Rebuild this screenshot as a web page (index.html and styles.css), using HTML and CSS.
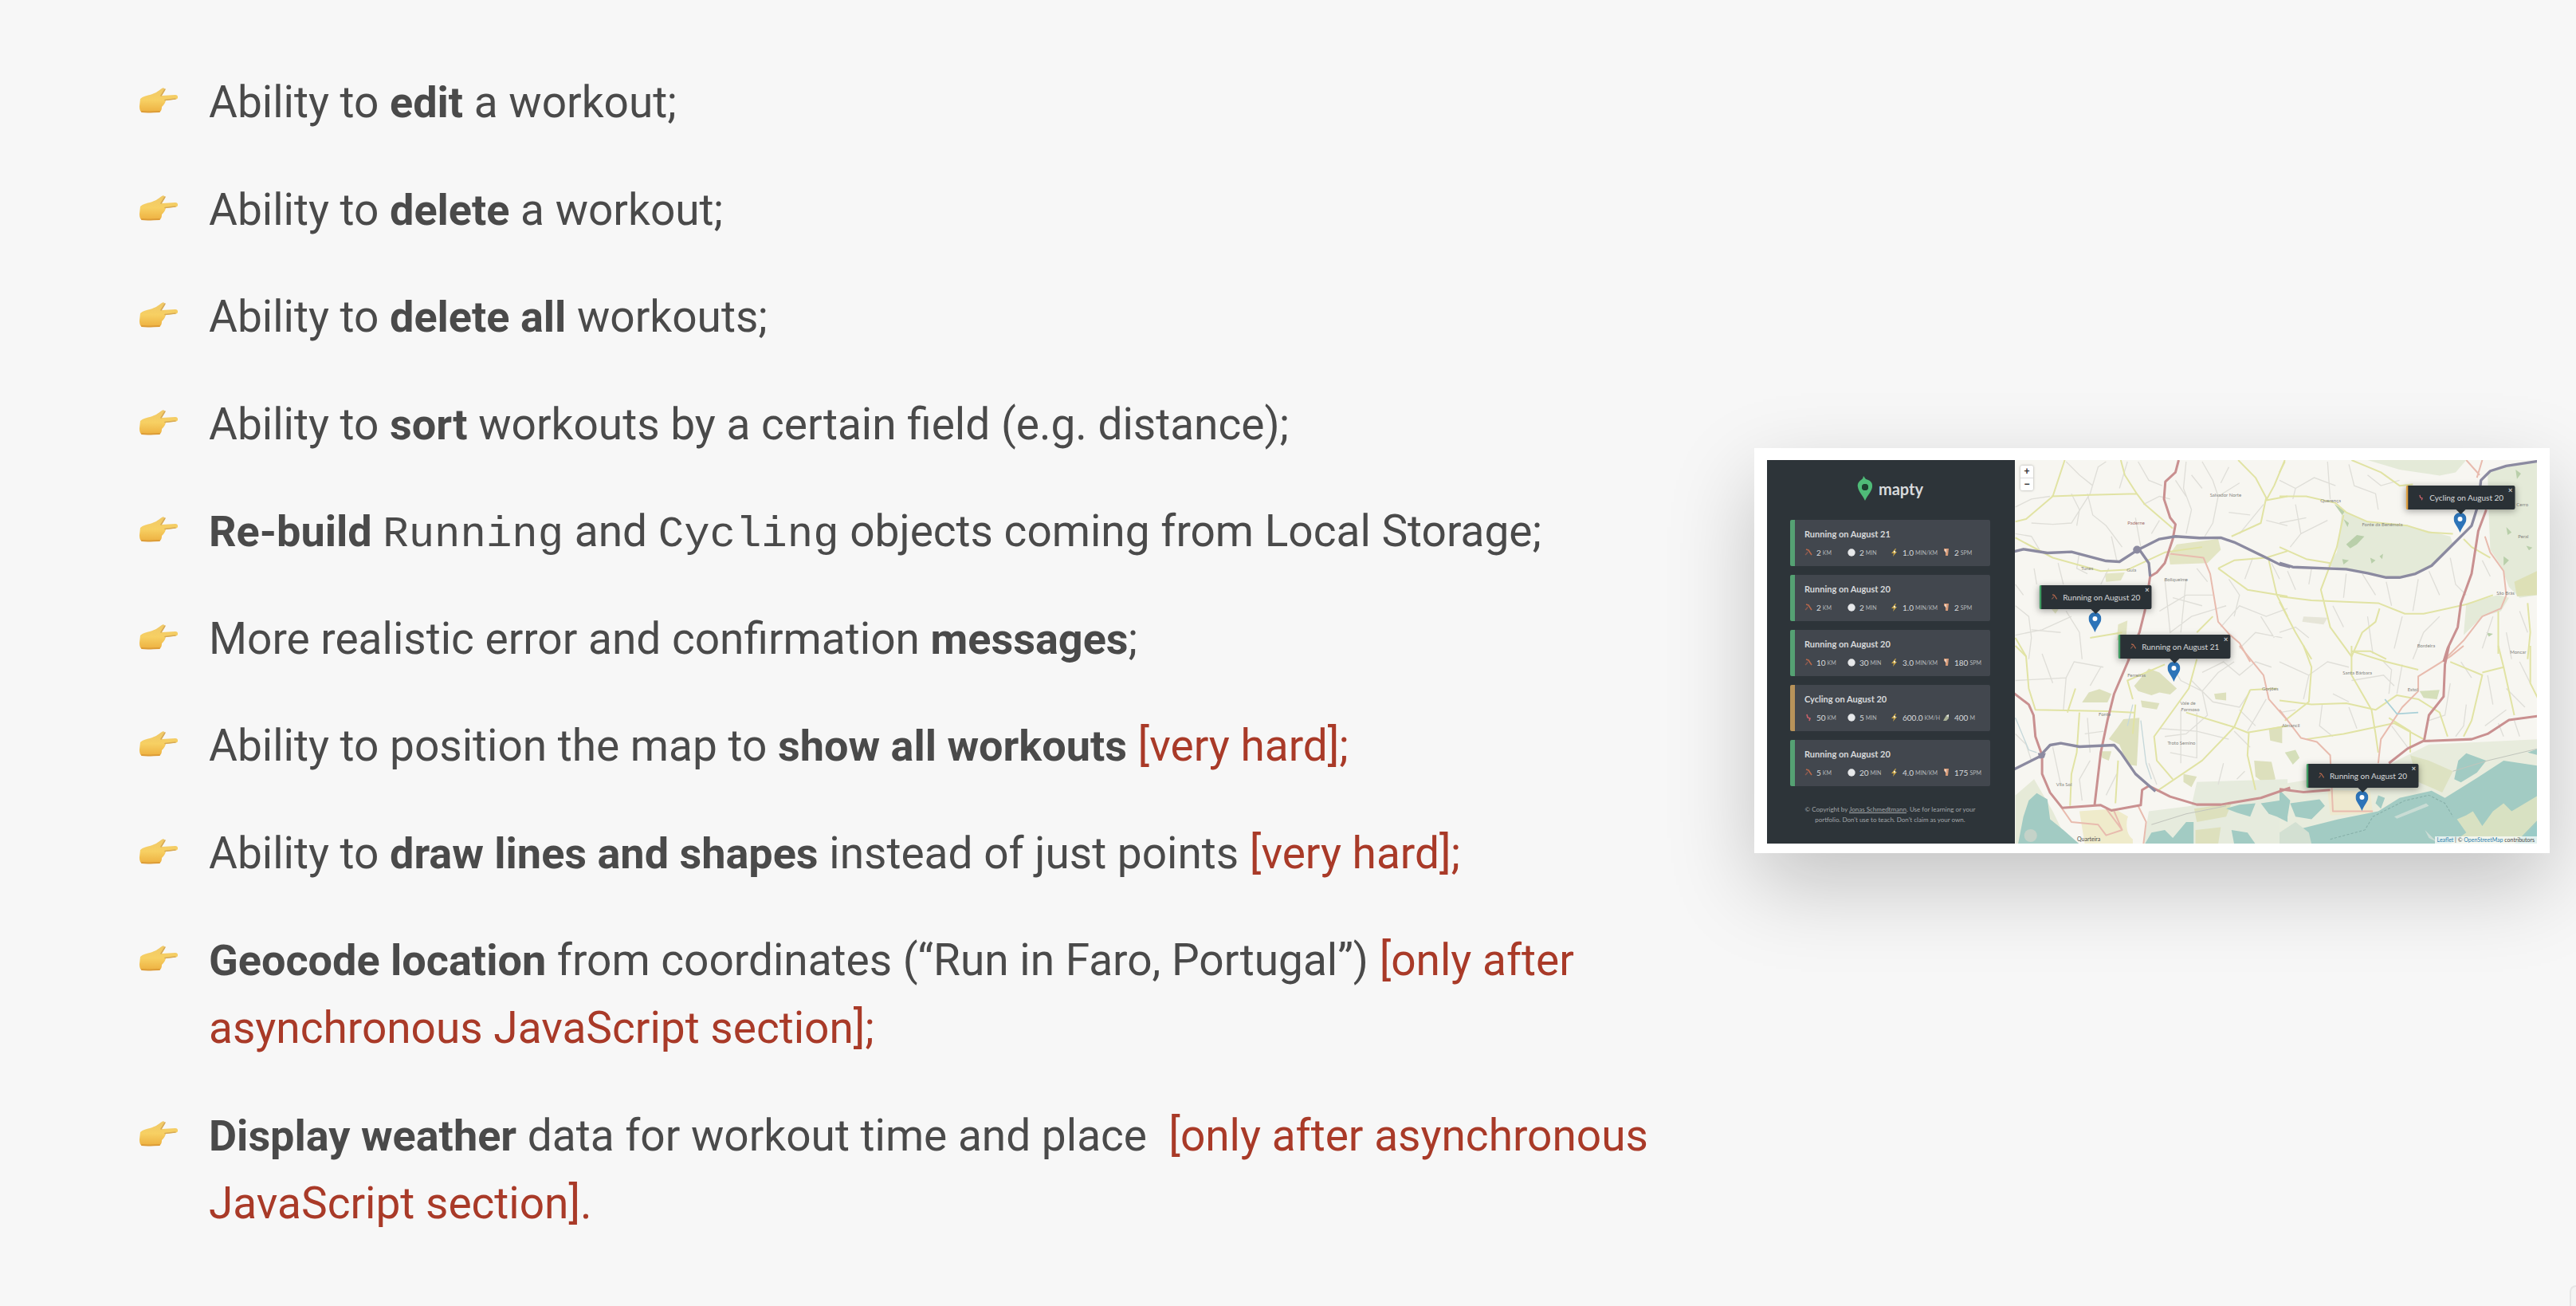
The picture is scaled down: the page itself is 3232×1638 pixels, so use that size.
FILE: index.html
```html
<!DOCTYPE html>
<html lang="en">
<head>
<meta charset="utf-8">
<meta name="viewport" content="width=device-width, initial-scale=1">
<title>Mapty: additional feature ideas</title>
<link rel="stylesheet" href="styles.css">
</head>
<body>
<svg class="sprite" aria-hidden="true">
  <defs>
    <linearGradient id="skin" x1="0" y1="0" x2="0" y2="1">
      <stop offset="0" stop-color="#efc868"/>
      <stop offset=".5" stop-color="#f7d063"/>
      <stop offset="1" stop-color="#edb040"/>
    </linearGradient>
  </defs>
  <symbol id="hand" viewBox="0 0 49 32">
    <path d="M2 14C5 11 10 10 14 9C21 7 25 4 29 1C32-1 34 2 32 5L29 10L46 9C50 9 50 14 47 14.500L34 16C33 20 31 22 29 24C29 29 27 31 23 31L5 31C2 31 1 27 1 23Z" fill="url(#skin)"/>
    <path d="M33 2L28 10M33 15.500L46 14" fill="none" stroke="#d6a957" stroke-width="1.500" stroke-linecap="round"/>
    <path d="M4 30C11 31 19 30 26 30" fill="none" stroke="#dc9c37" stroke-width="2" stroke-linecap="round"/>
  </symbol>
  <symbol id="pin" viewBox="0 0 16 25">
    <path d="M8 0C3.500 0 0 3.500 0 8C0 13 5 17 8 25C11 17 16 13 16 8C16 3.500 12.500 0 8 0Z" fill="#2d74b8"/>
    <circle cx="8" cy="8" r="3" fill="#fff"/>
  </symbol>
  <symbol id="runner" viewBox="0 0 10 10">
    <path d="M2 1L5 2L7 5L9 8" fill="none" stroke="#b5674b" stroke-width="1.600"/>
    <path d="M4 4L3 6L1 8" fill="none" stroke="#8a5a50" stroke-width="1.400"/>
  </symbol>
  <symbol id="bike" viewBox="0 0 10 10">
    <path d="M3 1L4 5L7 6L6 9" fill="none" stroke="#c9616a" stroke-width="1.600"/>
  </symbol>
  <symbol id="clock" viewBox="0 0 10 10"><circle cx="5" cy="5" r="4.700" fill="#e6e8ea"/></symbol>
  <symbol id="bolt" viewBox="0 0 10 10">
    <path d="M6 0L1 6H4L3 10L8 4H5L7 0Z" fill="#c9a545"/><circle cx="5" cy="4" r="1.200" fill="#f4eed0"/>
  </symbol>
  <symbol id="foot" viewBox="0 0 10 10">
    <path d="M2 0H8L7 9H4L4 4L2 3Z" fill="#d59a78"/><path d="M3 1H5V5H4Z" fill="#f2ded0"/>
  </symbol>
  <symbol id="hill" viewBox="0 0 10 10">
    <path d="M1 9L5 2L8 1L8 6L5 9Z" fill="#a9b096"/><path d="M5 3L8 1V4Z" fill="#f1f1ec"/>
  </symbol>
</svg>

<main class="slide">
  <ul class="features">
    <li><svg class="hand" aria-hidden="true"><use href="#hand"/></svg><p>Ability to <strong>edit</strong> a workout;</p></li>
    <li><svg class="hand" aria-hidden="true"><use href="#hand"/></svg><p>Ability to <strong>delete</strong> a workout;</p></li>
    <li><svg class="hand" aria-hidden="true"><use href="#hand"/></svg><p>Ability to <strong>delete all</strong> workouts;</p></li>
    <li><svg class="hand" aria-hidden="true"><use href="#hand"/></svg><p>Ability to <strong>sort</strong> workouts by a certain field (e.g. distance);</p></li>
    <li><svg class="hand" aria-hidden="true"><use href="#hand"/></svg><p><strong>Re-build</strong> <code>Running</code> and <code>Cycling</code> objects coming from Local Storage;</p></li>
    <li><svg class="hand" aria-hidden="true"><use href="#hand"/></svg><p>More realistic error and confirmation <strong>messages</strong>;</p></li>
    <li><svg class="hand" aria-hidden="true"><use href="#hand"/></svg><p>Ability to position the map to <strong>show all workouts</strong> <em>[very hard];</em></p></li>
    <li><svg class="hand" aria-hidden="true"><use href="#hand"/></svg><p>Ability to <strong>draw lines and shapes</strong> instead of just points <em>[very hard];</em></p></li>
    <li><svg class="hand" aria-hidden="true"><use href="#hand"/></svg><p><strong>Geocode location</strong> from coordinates (“Run in Faro, Portugal”) <em>[only after asynchronous JavaScript section];</em></p></li>
    <li><svg class="hand" aria-hidden="true"><use href="#hand"/></svg><p><strong>Display weather</strong> data for workout time and place&nbsp; <em>[only after asynchronous JavaScript section].</em></p></li>
  </ul>

  <div class="preview">
    <div class="app">
      <aside class="sidebar">
        <div class="logo">
          <svg class="logo-mark" viewBox="0 0 20 31" aria-hidden="true">
            <path fill-rule="evenodd" d="M8 0L11 4C16 5 20 8 19 14C18 20 13 24 10 31C7 24 2 20 1 14C0 10 2 7 5 5Q8 3 8 0ZM10 10A4 4 0 1 0 10 18A4 4 0 1 0 10 10Z" fill="#4fbb78"/>
            <circle cx="10" cy="14" r="4" fill="#1d4030"/>
          </svg>
          <span>mapty</span>
        </div>
        <ul class="workouts">
          <li class="workout">
            <h2>Running on August 21</h2>
            <div class="stats">
              <span><svg><use href="#runner"/></svg>2 <small>KM</small></span>
              <span><svg><use href="#clock"/></svg>2 <small>MIN</small></span>
              <span><svg><use href="#bolt"/></svg>1.0 <small>MIN/KM</small></span>
              <span><svg><use href="#foot"/></svg>2 <small>SPM</small></span>
            </div>
          </li>
          <li class="workout">
            <h2>Running on August 20</h2>
            <div class="stats">
              <span><svg><use href="#runner"/></svg>2 <small>KM</small></span>
              <span><svg><use href="#clock"/></svg>2 <small>MIN</small></span>
              <span><svg><use href="#bolt"/></svg>1.0 <small>MIN/KM</small></span>
              <span><svg><use href="#foot"/></svg>2 <small>SPM</small></span>
            </div>
          </li>
          <li class="workout">
            <h2>Running on August 20</h2>
            <div class="stats">
              <span><svg><use href="#runner"/></svg>10 <small>KM</small></span>
              <span><svg><use href="#clock"/></svg>30 <small>MIN</small></span>
              <span><svg><use href="#bolt"/></svg>3.0 <small>MIN/KM</small></span>
              <span><svg><use href="#foot"/></svg>180 <small>SPM</small></span>
            </div>
          </li>
          <li class="workout cycling">
            <h2>Cycling on August 20</h2>
            <div class="stats">
              <span><svg><use href="#bike"/></svg>50 <small>KM</small></span>
              <span><svg><use href="#clock"/></svg>5 <small>MIN</small></span>
              <span><svg><use href="#bolt"/></svg>600.0 <small>KM/H</small></span>
              <span><svg><use href="#hill"/></svg>400 <small>M</small></span>
            </div>
          </li>
          <li class="workout">
            <h2>Running on August 20</h2>
            <div class="stats">
              <span><svg><use href="#runner"/></svg>5 <small>KM</small></span>
              <span><svg><use href="#clock"/></svg>20 <small>MIN</small></span>
              <span><svg><use href="#bolt"/></svg>4.0 <small>MIN/KM</small></span>
              <span><svg><use href="#foot"/></svg>175 <small>SPM</small></span>
            </div>
          </li>
        </ul>
        <p class="copyright">© Copyright by <a href="#">Jonas Schmedtmann</a>. Use for learning or your<br>portfolio. Don't use to teach. Don't claim as your own.</p>
      </aside>

      <div class="map">
        <svg class="tiles" viewBox="0 0 655 479" preserveAspectRatio="xMidYMid slice" aria-hidden="true">
          <rect width="655" height="479" fill="#f7f6f1"/>

          <!-- woodland, scrub and built-up land -->
          <g transform="translate(332 -18) scale(.33333)" fill="#e4ead8">
            <path d="M330 54H700L660 100L600 112L520 100L450 90Z"/>
            <path d="M235 240L330 285L480 300L640 340L650 370L570 450L490 490L420 497L330 480L180 450L215 400Z"/>
            <path d="M780 100L860 70L970 60V560L900 570L860 530L830 450L790 390L785 270Z"/>
            <path d="M700 590L820 560L860 570L830 620L760 640L690 710Z"/>
            <g fill="#b9cfaa">
              <path d="M250 370L290 335L318 340L290 370L265 385ZM240 275L260 290L255 305ZM205 218L245 245L235 260ZM340 420L360 430L345 442ZM375 415L388 405L385 425ZM235 425L260 430L240 445ZM840 415L860 430L840 450ZM850 305L870 325L855 335ZM925 375L948 382L935 392ZM885 90L905 105L890 125ZM775 700L800 705L785 716Z"/>
            </g>
            <path d="M90 640L180 645L165 670L85 660Z" fill="#e6e5d8"/>
            <path d="M880 510L965 470V560L890 565Z" fill="#dde0b6"/>
          </g>
          <g transform="translate(-18 -18) scale(.33333)" fill="#e3e5c4">
            <path d="M665 370L820 350L830 390L780 440L640 445L635 410Z"/>
            <path d="M395 480L470 475L455 505L400 510ZM445 670L480 655L475 720L440 730ZM185 600H230L210 630Z"/>
          </g>
          <g transform="translate(-18 232) scale(.33333)" fill="#dde0bd">
            <path d="M310 212L335 175L375 162L420 180L405 212Z"/>
            <path d="M505 150L560 85L600 100L665 160L640 182L600 175L570 185L520 170Z"/>
            <path d="M465 275L525 270L515 450L480 445L450 370L410 350L440 310Z"/>
            <path d="M530 205L600 215L590 238L535 230ZM805 180L850 175V205L810 200ZM690 480L740 490L720 530L690 510ZM955 430L1020 435L1035 500L1000 520L960 490ZM1010 310L1060 300V365L1015 355ZM380 395H420L410 430L385 420Z"/>
            <path d="M60 560L130 500L200 620L260 743H60Z" fill="#e6ead8"/>
            <path d="M740 510L1080 500V743H540L560 620L720 600Z" fill="#e6ebdd"/>
            <path d="M300 620L430 610L500 650V743H320Z" fill="#efebcb"/>
            <path d="M730 610L870 590L850 640L740 660ZM735 690L830 680L820 743H735Z"/>
            <ellipse cx="512" cy="670" rx="35" ry="58" fill="#f7f6f1"/>
          </g>
          <g transform="translate(332 232) scale(.33333)">
            <path d="M0 520L120 500L420 440L560 370L970 350V743H0Z" fill="#e8ecdd"/>
            <path d="M490 410L560 430L650 470L610 550L520 510Z" fill="#dde2c2"/>
            <path d="M180 540L340 545L350 630L190 635Z" fill="#eee9cf"/>
            <path d="M20 400L60 390L75 420L50 445ZM525 170L600 165L590 200L540 195Z" fill="#d5dfba"/>
          </g>

          <!-- lagoon and sea -->
          <g fill="#a2cbc3">
            <path transform="translate(-18 232) scale(.33333)" d="M70 743L90 640L110 580L140 552L180 575L190 650L240 690L300 743Z"/>
            <path transform="translate(-18 232) scale(.33333)" d="M545 743L570 700L620 690L650 720L700 660H728V743ZM850 610L900 595L960 590L940 640L890 625ZM980 590L1080 575V660L1040 640L1010 630ZM870 690L930 700L960 743H880Z"/>
            <g transform="translate(332 232) scale(.33333)">
              <path d="M0 743L60 690L220 650L370 620L450 570L570 543L620 570L740 495L840 430L970 450V743Z"/>
              <path d="M655 500L670 430L700 403L775 430L740 475L680 512ZM370 560L395 570L380 610L360 590ZM40 590L150 575L170 600L120 650L60 640ZM0 540L40 580L30 640L0 630ZM930 400L970 385V410Z"/>
              <path d="M665 650L700 635L725 620L760 675L800 620L840 590L870 620L970 560V650L880 743H640L700 700Z" fill="#d8e1c2"/>
              <path d="M890 743L970 660V743Z" fill="#9acbc7"/>
              <path d="M0 700L60 660L110 700L120 743H0Z" fill="#d3e0d2"/>
              <path d="M430 640L550 590L560 600L440 648ZM545 690L590 735L560 720ZM820 600L855 640" fill="#c9dcd4"/>
              <path d="M190 725L320 690L350 640L470 580L560 560L620 590L650 640" fill="none" stroke="#86afa8" stroke-width="3" stroke-dasharray="10 6"/>
            </g>
            <circle cx="21" cy="469" r="8" fill="#c4d2c8"/>
          </g>

          <!-- lanes -->
          <g fill="none" stroke="#dfded8" stroke-width="4">
            <g transform="translate(-18 -18) scale(.33333)">
              <path d="M60 230L120 200L190 190M120 290L200 295L270 290L340 180L370 80L400 60M330 180L350 260L400 300L460 380M250 60L300 110L350 150M480 60L450 160M520 60L560 130L610 150M540 220L600 190L640 200M700 60L690 160L720 240L700 330M760 60L800 130L820 190L800 290L770 340M820 190L900 140M860 80L830 140M900 330L990 220M130 460L140 520M220 440L240 520M300 400L290 460L330 480M60 600L110 640L120 720L110 800M250 620L300 700L310 800M120 690L230 700M600 620L700 560L800 560M620 500L640 700L720 640L850 600M700 500L680 700M860 500L900 560L880 640M830 680L900 600L1000 640L1080 610M900 760L960 700L1060 720M980 640L1030 720M950 420L920 500M1020 440L1050 500"/>
              <path d="M60 330L120 340L150 390M270 180L300 240L290 300M420 340L440 430M510 270L530 380M570 330L600 280M660 130L700 190M720 110L760 160M860 250L940 260M1000 280L1080 300M60 520L90 560M380 520L410 460M740 460L780 510M650 570L760 600M60 710L160 690L270 640"/>
            </g>
            <g transform="translate(332 -18) scale(.33333)">
              <path d="M0 130L60 160L130 120L210 150M60 160L50 200M180 60L190 200M260 70L280 150L360 180L370 240M330 110L380 150L450 130M60 220L80 330L40 380M80 330L180 280M0 290L100 270M30 470L60 540M120 460L110 520M250 480L240 570M310 480L360 560M400 510L420 600M520 500L500 620M560 470L600 560M640 420L660 520L700 560M760 430L790 490M0 700L60 680L110 720M200 600L240 680M330 640L350 780M460 640L430 760M600 640L540 700L500 800M850 700L870 800M900 620L930 700M800 640L760 760"/>
            </g>
            <g transform="translate(-18 232) scale(.33333)">
              <path d="M60 130L250 120L280 60L390 80M250 120L240 240M160 30L200 140M380 80L340 150M320 330L390 320M330 270L340 400M640 60L680 130L760 170L820 100L880 60M720 130L800 210L900 230L940 170M760 170L780 260L700 330L620 340M600 310L740 320L860 350M680 240V440M740 250V420L640 400M900 240L960 300M880 320L940 380M1000 200L930 320M840 440L820 520M920 470L890 500M60 330L100 370L120 430M200 380L230 520M340 430L300 500L310 580M440 480L400 560M560 440L590 520M1020 80L960 60L900 110L840 60L760 100"/>
              <path d="M60 270L110 390L140 400M530 280L550 440L570 500M500 220L480 300" stroke="#c6d8da"/>
            </g>
            <g transform="translate(332 232) scale(.33333)">
              <path d="M0 60L110 110L90 200M110 110L180 60L260 80M160 220L150 300L200 340M0 250L60 240M270 130L390 110L430 150M200 180L260 210M260 230L290 310M390 60L420 90L410 180M460 70L440 180M420 300L480 380M640 140L620 260L560 280M680 60L720 120M700 220L690 300L660 340M780 110L800 220M850 160L920 230M770 300L850 240M820 290L840 340M880 280L900 340M900 60L940 140"/>
            </g>
          </g>

          <!-- secondary roads -->
          <g fill="none" stroke="#e1e3a4" stroke-width="6" stroke-linejoin="round">
            <g transform="translate(-18 -18) scale(.33333)">
              <path d="M245 54L200 190L100 275L60 285M195 190L340 185L515 180L470 110L455 54M515 180L545 220L650 310M60 345L200 420L380 470L480 465L620 400L760 380M895 54L960 120L1000 195L980 290L870 340M1070 54L1030 150L1000 205L1080 190M820 460L880 430L1000 420L1080 395M820 460L930 540L1080 565M1010 430L1040 560L1080 640M60 720L100 790M740 700L800 640M340 720L460 700"/>
            </g>
            <g transform="translate(332 -18) scale(.33333)">
              <path d="M0 190L100 190L210 215L250 250L330 285L480 300L560 325L650 330M270 54L380 100L450 150L500 145M0 380L100 425L190 440M240 260L215 380L155 540L190 680L270 790L310 700L360 660L375 610M0 565L120 580L370 590L470 630H540L700 595L800 560M0 585L60 700L120 800M270 770L340 770L400 800M690 350L720 380L790 420M820 620V780M930 590L940 700L930 800M20 60L0 100"/>
            </g>
            <g transform="translate(-18 232) scale(.33333)">
              <path d="M60 0L100 40L110 160L135 240L400 245L505 250M285 160L255 250M300 250L290 400L270 480L265 600M740 50L710 160L580 340L590 430L650 500M500 200L480 130L620 70M700 250L880 305L930 325L1080 300M940 165L880 305L760 430L590 545M940 165L1040 160M935 325L930 410L960 540M445 430L435 590M500 330L510 220"/>
            </g>
            <g transform="translate(332 232) scale(.33333)">
              <path d="M90 0L120 80L110 210L20 280M270 0L270 110L345 240L360 330L370 400M270 20L400 60L520 90M0 205L120 220L250 215L360 240L440 185L520 200L600 250L630 340M100 350L240 330L430 290L540 350M640 60L760 110L720 280L690 340M760 100L840 80L820 0M840 80L880 260M940 0L940 140L970 200M410 270L490 320V400"/>
            </g>
          </g>

          <!-- primary roads -->
          <g fill="none" stroke="#e8bbae" stroke-width="6" stroke-linejoin="round">
            <path transform="translate(-18 -18) scale(.33333)" d="M640 405L765 420L790 480L820 660L860 705L900 740L940 810"/>
            <path transform="translate(-18 232) scale(.33333)" d="M900 0L990 110L1010 200L1080 280M235 610L270 660L370 670L400 710L460 690L430 620M520 600L550 660L540 743M400 610L460 690"/>
            <path transform="translate(332 -18) scale(.33333)" d="M700 54L750 110M760 54L740 120M770 340L790 400L840 470L850 560L830 610L760 640L690 730L630 790"/>
            <path transform="translate(332 232) scale(.33333)" d="M0 240L80 345L140 360L190 410L200 620H350M690 0L640 40L520 115V170L460 230L380 350L370 440"/>
          </g>
          <path transform="translate(-18 232) scale(.33333)" d="M570 670L700 630L850 600" fill="none" stroke="#c2c5bd" stroke-width="3"/>
          <path transform="translate(332 232) scale(.33333)" d="M650 470L780 430L970 385" fill="none" stroke="#c0c5bc" stroke-width="3"/>
          <path transform="translate(332 232) scale(.33333)" d="M395 200L440 255L520 250" fill="none" stroke="#a9d0d8" stroke-width="5"/>

          <!-- trunk roads -->
          <g fill="none" stroke="#c99090" stroke-width="9" stroke-linejoin="round">
            <path transform="translate(-18 -18) scale(.33333)" d="M672 54L660 100L622 135L617 200L640 270L660 295L650 350L620 440L590 475L565 490L545 620L525 700L480 800"/>
            <path transform="translate(-18 232) scale(.33333)" d="M490 40L430 180L405 280L380 400L357 595M55 178L110 220L128 260L135 340L160 410V480L190 550L235 607L380 597L420 617L530 597L535 540L560 525L640 565L740 595H830L980 570L1090 532"/>
            <path transform="translate(332 -18) scale(.33333)" d="M775 240L745 320L720 480L680 590L668 680L630 760L615 810"/>
            <path transform="translate(332 232) scale(.33333)" d="M635 0L620 70L615 190L560 260L542 355L480 385L410 440M542 357L720 350L780 330L860 278L970 263M0 537L90 548L190 540"/>
          </g>

          <!-- motorways -->
          <g fill="none" stroke="#8b8aa0" stroke-width="10" stroke-linejoin="round">
            <path transform="translate(-18 -18) scale(.33333)" d="M55 397L90 388L180 402L270 398L400 432L450 435L520 390L600 350L660 340L750 346L830 345L880 362L1000 420L1050 445L1090 455M525 390L560 440L565 490"/>
            <path transform="translate(332 -18) scale(.33333)" d="M0 440L50 455L250 463L330 478L400 494H450L510 480L570 450L630 390L720 300L745 220L755 130L790 95L850 76L970 58"/>
            <path transform="translate(-18 232) scale(.33333)" d="M50 465L150 415L190 372L230 365L300 378L430 372L455 400L510 480L585 545"/>
            <circle cx="154" cy="112" r="5" fill="#8b8aa0" stroke="none"/>
            <path d="M30 366H40L38 372L32 373Z" fill="#8b8aa0" stroke="none"/>
          </g>

          <!-- place names -->
          <g class="places">
            <text x="245" y="46">Salvador Norte</text><text x="142" y="81" class="red">Paderne</text>
            <text x="84" y="137">Tunes</text><text x="141" y="139">Guia</text>
            <text x="188" y="151">Boliqueime</text><text x="383" y="53">Querença</text>
            <text x="435" y="83">Fonte da Benémola</text><text x="628" y="58">Cerro</text>
            <text x="630" y="98">Peral</text><text x="603" y="168">São Brás</text>
            <text x="504" y="234">Bordeira</text><text x="620" y="242">Moncar</text>
            <text x="411" y="268">Santa Bárbara</text>
            <text x="492" y="289">Estoi</text><text x="335" y="334">Almancil</text>
            <text x="142" y="271">Ferreiras</text><text x="106" y="320">Fonte</text>
            <text x="208" y="306">Vale de</text><text x="209" y="314">Formoso</text>
            <text x="192" y="356">Troto Semino</text><text x="53" y="407">Vila Sol</text>
            <text x="310" y="288">Gorjões</text><text x="79" y="476" class="town">Quarteira</text>
          </g>
        </svg>

        <div class="zoom">
          <button type="button" aria-label="Zoom in">+</button>
          <button type="button" aria-label="Zoom out">−</button>
        </div>

        <div class="marker" style="left:15.400%;top:45%">
          <div class="popup"><svg><use href="#runner"/></svg>Running on August 20<button type="button" aria-label="Close">×</button></div>
          <svg class="pin"><use href="#pin"/></svg>
        </div>
        <div class="marker" style="left:30.500%;top:57.800%">
          <div class="popup"><svg><use href="#runner"/></svg>Running on August 21<button type="button" aria-label="Close">×</button></div>
          <svg class="pin"><use href="#pin"/></svg>
        </div>
        <div class="marker" style="left:85.300%;top:19%">
          <div class="popup cycling"><svg><use href="#bike"/></svg>Cycling on August 20<button type="button" aria-label="Close">×</button></div>
          <svg class="pin"><use href="#pin"/></svg>
        </div>
        <div class="marker" style="left:66.500%;top:91.500%">
          <div class="popup"><svg><use href="#runner"/></svg>Running on August 20<button type="button" aria-label="Close">×</button></div>
          <svg class="pin"><use href="#pin"/></svg>
        </div>

        <div class="attribution"><a href="#">Leaflet</a> | © <a href="#">OpenStreetMap</a> contributors</div>
      </div>
    </div>
  </div>
</main>
<div class="page-corner" aria-hidden="true"></div>
</body>
</html>
```
FILE: styles.css
```css
* {
  box-sizing: border-box;
  margin: 0;
  padding: 0;
}

body {
  background: #f7f7f7;
  color: #4a4a4a;
  font-family: Roboto, "Liberation Sans", sans-serif;
}

.sprite {
  position: absolute;
  width: 0;
  height: 0;
}

.slide {
  display: grid;
  grid-template-columns: minmax(0, 2fr) minmax(0, 1fr);
  gap: 31px;
  min-height: 100vh;
  padding: 86px 33px 86px 174px;
}

/* Feature list */

.features {
  display: flex;
  flex-direction: column;
  justify-content: space-between;
  list-style: none;
  font-size: 55px;
  line-height: 85px;
}

.features li {
  display: grid;
  grid-template-columns: 49px minmax(0, 1fr);
  gap: 39px;
}

.hand {
  width: 49px;
  height: 32px;
  margin-top: 24px;
}

.features strong {
  font-size: 54px;
  font-weight: 700;
  line-height: 1px;
}

.features em {
  color: #a93a28;
  font-style: normal;
}

.features code {
  font-family: "Liberation Mono", monospace;
  font-size: 54px;
  line-height: 1px;
}

/* App preview */

.preview {
  align-self: center;
  margin-bottom: 6px;
  padding: 15px 16px 12px;
  background: #fff;
  box-shadow: 0 40px 100px rgba(0, 0, 0, 0.21);
}

.app {
  display: grid;
  grid-template-columns: 311px minmax(0, 1fr);
  font-family: Lato, "Liberation Sans", sans-serif;
}

.sidebar {
  padding: 20px 31px 23px 29px;
  background: #2d3439;
  color: #d8dadc;
}

.logo {
  display: flex;
  align-items: center;
  justify-content: center;
  gap: 7px;
  height: 31px;
  font-size: 20px;
  font-weight: 700;
  line-height: 30px;
}

.logo-mark {
  width: 20px;
  height: 31px;
}

.workouts {
  display: grid;
  gap: 11px;
  margin-top: 24px;
  list-style: none;
}

.workout {
  height: 58px;
  padding: 11px 8px 10px 12px;
  border-left: 6px solid #55a173;
  border-radius: 2px;
  background: #42474e;
}

.workout.cycling {
  border-left-color: #b8935a;
}

.workout h2 {
  font-size: 11px;
  font-weight: 700;
  line-height: 14px;
}

.stats {
  display: grid;
  grid-template-columns: 54px 54px 65px minmax(0, 1fr);
  margin-top: 9px;
  font-size: 10px;
  line-height: 14px;
  white-space: nowrap;
}

.stats span {
  display: flex;
  align-items: center;
  gap: 2px;
}

.stats svg {
  width: 10px;
  height: 10px;
  margin-right: 3px;
}

.stats small {
  color: #b4b7ba;
  font-size: 7px;
}

.copyright {
  margin-top: 23px;
  color: #a3a7aa;
  font-size: 8px;
  line-height: 13px;
  text-align: center;
  white-space: nowrap;
}

.copyright a {
  color: inherit;
}

/* Map */

.map {
  position: relative;
  overflow: hidden;
}

.tiles {
  position: absolute;
  inset: 0;
  width: 100%;
  height: 100%;
}

.places text {
  fill: #85857f;
  font-size: 6px;
}

.places .red {
  fill: #a5706c;
}

.places .town {
  fill: #4f4f4b;
  font-size: 7px;
}

.zoom {
  position: absolute;
  top: 7px;
  left: 7px;
  display: grid;
  width: 16px;
  border-radius: 2px;
  background: #fff;
  box-shadow: 0 0 3px rgba(0, 0, 0, 0.35);
}

.zoom button {
  height: 15px;
  border: 0;
  background: none;
  color: #333;
  font: 700 12px/15px "Liberation Sans", sans-serif;
}

.zoom button + button {
  height: 16px;
  border-top: 1px solid #ddd;
}

.marker {
  position: absolute;
  display: flex;
  flex-direction: column;
  align-items: center;
  transform: translate(-50%, -100%);
}

.popup {
  position: relative;
  display: flex;
  align-items: center;
  gap: 7px;
  height: 30px;
  padding: 0 14px 0 12px;
  border-left: 3px solid #3f9d62;
  border-radius: 2px;
  background: #2a3136;
  box-shadow: 0 2px 8px rgba(0, 0, 0, 0.35);
  color: #d8dadc;
  font-size: 10px;
  white-space: nowrap;
}

.popup.cycling {
  border-left-color: #e0a040;
}

.popup::after {
  content: "";
  position: absolute;
  top: 100%;
  left: 50%;
  margin-left: -7px;
  border: 6px solid transparent;
  border-top-color: #2a3136;
}

.popup svg {
  width: 8px;
  height: 8px;
}

.popup button {
  position: absolute;
  top: 2px;
  right: 3px;
  border: 0;
  background: none;
  color: #c3c6c8;
  font: 700 9px/9px "Liberation Sans", sans-serif;
}

.pin {
  width: 16px;
  height: 25px;
  margin-top: 4px;
}

.attribution {
  position: absolute;
  right: 0;
  bottom: 0;
  padding: 0 3px;
  background: rgba(255, 255, 255, 0.7);
  color: #444;
  font-size: 7px;
  line-height: 9px;
}

.attribution a {
  color: #2f7fb0;
  text-decoration: none;
}

/* Edge of the sheet beneath the slide */

.page-corner {
  position: fixed;
  right: 0;
  bottom: 0;
  width: 8px;
  height: 26px;
  border: solid #e6e6e6;
  border-width: 2px 0 0 2px;
  border-top-left-radius: 8px;
  background: #f4f4f4;
}
```
